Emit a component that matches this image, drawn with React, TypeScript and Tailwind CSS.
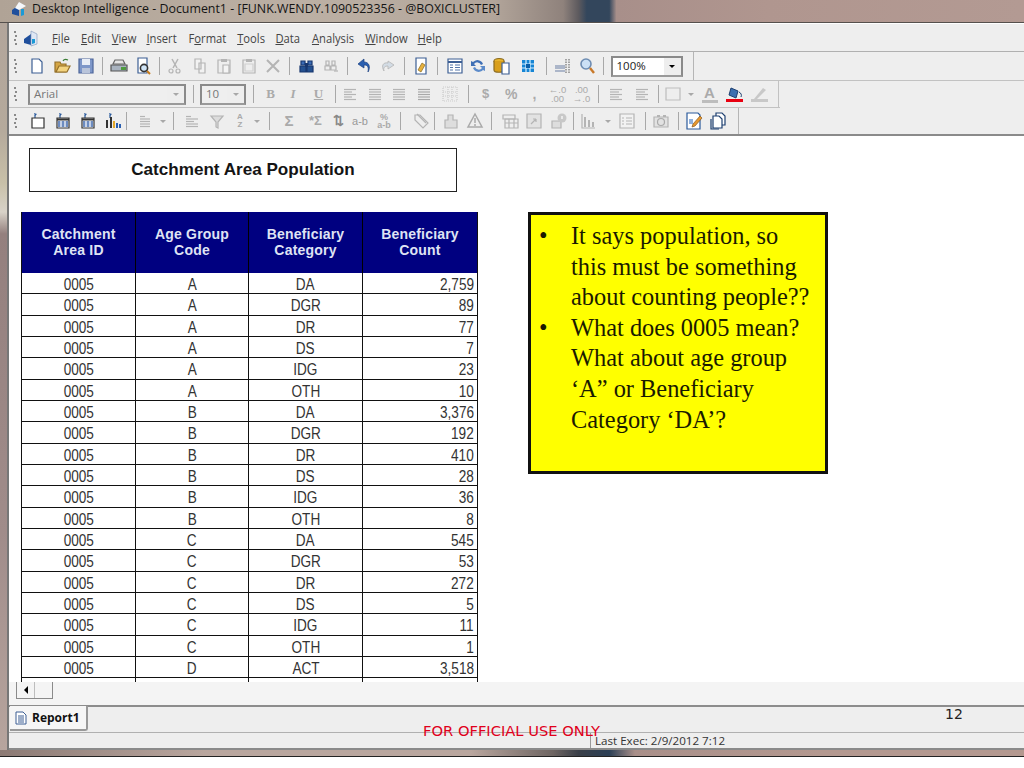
import type { ReactNode } from 'react'

const SANS = "font-['Open_Sans',sans-serif]"
const ARIAL = "font-['Liberation_Sans',Arial,sans-serif]"

const D = '#b4b4b4'
const BLUE = '#1f4f9c'

const rows = [
  ['A', 'DA', '2,759'], ['A', 'DGR', '89'], ['A', 'DR', '77'], ['A', 'DS', '7'], ['A', 'IDG', '23'], ['A', 'OTH', '10'],
  ['B', 'DA', '3,376'], ['B', 'DGR', '192'], ['B', 'DR', '410'], ['B', 'DS', '28'], ['B', 'IDG', '36'], ['B', 'OTH', '8'],
  ['C', 'DA', '545'], ['C', 'DGR', '53'], ['C', 'DR', '272'], ['C', 'DS', '5'], ['C', 'IDG', '11'], ['C', 'OTH', '1'],
  ['D', 'ACT', '3,518'],
]

function Svg({ children }: { children: ReactNode }) {
  return (
    <svg width="18" height="18" viewBox="0 0 18 18" fill="none" strokeWidth="1.2">
      {children}
    </svg>
  )
}

// toolbar slot, 24.5px wide unless told otherwise
function Slot({ children, w = 'w-[24.5px]' }: { children: ReactNode; w?: string }) {
  return <div className={`${w} h-full flex items-center justify-center shrink-0`}>{children}</div>
}

function Sep({ w = 'w-[8.5px]' }: { w?: string }) {
  return (
    <div className={`${w} h-full flex items-center justify-center shrink-0`}>
      <div className="w-px h-[18px] bg-[#a8a8a8]" />
    </div>
  )
}

function Grip() {
  return (
    <div className="w-[16px] pl-[5px] h-full flex flex-col justify-center gap-[2px] shrink-0">
      {[0, 1, 2, 3].map(i => (
        <div key={i} className={`w-[2px] h-[2px] bg-[#8a8a8a] ${i % 2 ? 'ml-[1px]' : ''}`} />
      ))}
    </div>
  )
}

function Caret({ dark }: { dark?: boolean }) {
  return <div className={`w-0 h-0 border-x-[3px] border-x-transparent border-t-[3px] ${dark ? 'border-t-black' : 'border-t-[#a8a8a8]'}`} />
}

function Combo({ w, label, dark, btn = 'w-[14px]' }: { w: string; label: string; dark?: boolean; btn?: string }) {
  return (
    <div className={`${w} h-[21px] flex border-2 border-[#8a8a8a] border-b-[#9a9a9a] border-r-[#8a8a8a] shrink-0 ${dark ? 'bg-white' : 'bg-[#efefef]'}`}>
      <div className={`flex-1 pl-[4px] text-[11.5px] leading-[16px] ${SANS} ${dark ? 'text-[#222]' : 'text-[#777]'}`}>{label}</div>
      <div className={`${btn} bg-[#eeeeee] flex items-center justify-center`}>
        <Caret dark={dark} />
      </div>
    </div>
  )
}

const Lines = ({ x = 3, c = D, widths = [12, 8, 12, 8, 12] }: { x?: number; c?: string; widths?: number[] }) => (
  <Svg>
    {widths.map((w, i) => (
      <path key={i} d={`M${x} ${4.5 + i * 2.5}h${w}`} stroke={c} />
    ))}
  </Svg>
)

function ToolbarOne() {
  return (
    <div className="h-[28px] w-[685px] flex items-center border-r border-[#b5b5b5]">
      <Grip />
      <Slot><Svg><path d="M4 2h7l3 3v11H4z" fill="#fff" stroke="#3d5f94" /></Svg></Slot>
      <Slot><Svg><path d="M2 15V5h5l1 2h5v8z" fill="#d5a645" stroke="#94702a" /><path d="M3 15l3-6h11l-3 6z" fill="#f3d37e" stroke="#94702a" /><path d="M10 4c1-2 3-2 5-1" stroke="#3a7d35" /></Svg></Slot>
      <Slot><Svg><path d="M2 2h14v14H2z" fill="#7e97c9" stroke="#4d6599" /><path d="M5 2h8v6H5z" fill="#e8edf6" /><path d="M5 11h8v5H5z" fill="#b9c4da" /></Svg></Slot>
      <Sep w="w-[8px]" />
      <Slot><Svg><path d="M5 3h8l2 4H3z" fill="#e6e6e6" stroke="#666" /><path d="M1 8h16v6H1z" fill="#a9b3bf" stroke="#555" /><path d="M11 10h5v3h-5z" fill="#4e9a3f" /></Svg></Slot>
      <Slot><Svg><path d="M4 1h9v15H4z" fill="#fff" stroke="#3d5f94" /><circle cx="10" cy="11" r="3.6" fill="#cfe4f7" stroke="#333" strokeWidth="1.6" /><path d="M13 14l3 3" stroke="#c47a1c" strokeWidth="2" /></Svg></Slot>
      <Sep w="w-[7.5px]" />
      <Slot><Svg><path d="M12 2L7 11M6 2l5 9" stroke={D} strokeWidth="1.5" /><circle cx="5" cy="14" r="2" stroke={D} /><circle cx="12" cy="14" r="2" stroke={D} /></Svg></Slot>
      <Slot><Svg><path d="M4 2h6v10H4zM8 6h6v10H8z" fill="#f2f2f2" stroke={D} /></Svg></Slot>
      <Slot><Svg><path d="M3 3h12v13H3z" stroke={D} /><path d="M6 2h6v3H6z" fill={D} /><path d="M8 8h6v8H8z" fill="#f4f4f4" stroke={D} /></Svg></Slot>
      <Slot><Svg><path d="M3 3h12v13H3z" stroke={D} /><path d="M6 2h6v3H6z" fill={D} /><path d="M5 7h8v7H5z" stroke="#d0d0d0" /></Svg></Slot>
      <Slot><Svg><path d="M3 3l12 12M15 3L3 15" stroke={D} strokeWidth="2" /></Svg></Slot>
      <Sep />
      <Slot><Svg><path d="M4 4h4v4H4zM11 4h4v4h-4z" fill="#3c6cb5" stroke="#17366e" /><path d="M3 9h6v6H3zM10 9h6v6h-6z" fill="#24508f" stroke="#17366e" /><path d="M8 6h3v4H8z" fill="#17366e" /></Svg></Slot>
      <Slot><Svg><path d="M4 4h3v4H4zM10 4h3v4h-3zM3 9h5v4H3zM9 9h5v4H9z" stroke={D} /><path d="M12 14h4" stroke={D} /></Svg></Slot>
      <Sep />
      <Slot><Svg><path d="M9 2L3 7l6 4V8c3 0 5 1 4 7 3-5 1-10-4-10z" fill="#2a5fb0" stroke="#1a3f80" strokeWidth=".7" /></Svg></Slot>
      <Slot><Svg><path d="M9 4l6 4-6 4V9C6 9 4 10 5 14 2 9 4 5 9 6z" fill="#d3dce5" stroke={D} strokeWidth=".8" /></Svg></Slot>
      <Sep />
      <Slot><Svg><path d="M4 1h10v16H4z" fill="#fff" stroke="#3d5f94" /><path d="M6 13l4-7 3 2-4 7z" fill="#e6b13e" stroke="#8a6a1f" strokeWidth=".7" /></Svg></Slot>
      <Sep />
      <Slot w="w-[22px] ml-[2px]"><Svg><path d="M2 2h14v14H2z" fill="#fff" stroke="#3d5f94" /><path d="M2 5h14" stroke="#3d5f94" strokeWidth="2" /><path d="M4 8h3M4 10.500h3M4 13h3M9 8h5M9 10.500h5M9 13h5" stroke="#5577aa" /></Svg></Slot>
      <Slot w="w-[24px]"><Svg><path d="M14 7a6 6 0 0 0-10-2L2 4v5h5L5 7a4 4 0 0 1 7 1z" fill="#3f6fb5" /><path d="M4 11a6 6 0 0 0 10 2l2 1V9h-5l2 2a4 4 0 0 1-7-1z" fill="#5c8bca" /></Svg></Slot>
      <Slot w="w-[24px]"><Svg><ellipse cx="6" cy="4" rx="5" ry="2.500" fill="#e8b42c" stroke="#8a6a1f" /><path d="M1 4v9c0 3 10 3 10 0V4" fill="#d99f1b" stroke="#8a6a1f" /><path d="M9 6h7v11H9z" fill="#fff" stroke="#3d5f94" /></Svg></Slot>
      <Slot w="w-[28px]"><Svg><path d="M3 3h12v12H3z" fill="#1685d4" /><path d="M3 7h12M3 11h12M7 3v12M11 3v12" stroke="#d8f0ff" /><path d="M7 7h4v4H7z" fill="#0b5fa8" /></Svg></Slot>
      <Sep />
      <Slot><Svg><path d="M1 9h10M1 11h10M1 14h10" stroke="#6a7fa3" /><path d="M12 2v14M15 2v14" stroke="#8a8a8a" strokeDasharray="1.500 1" strokeWidth="1.500" /></Svg></Slot>
      <Slot><Svg><circle cx="8" cy="7" r="5" fill="#cbe0f5" stroke="#6d8cb2" strokeWidth="1.600" /><path d="M12 11l4 5" stroke="#c8792a" strokeWidth="2.400" /></Svg></Slot>
      <Sep w="w-[7px]" />
      <div className="w-[4px]" />
      <Combo w="w-[72px]" label="100%" dark btn="w-[17px]" />
    </div>
  )
}

function ToolbarTwo() {
  return (
    <div className="h-[26px] w-[770px] flex items-center border-r border-[#c2c2c2]">
      <Grip />
      <div className="w-[3px]" />
      <Combo w="w-[158px]" label="Arial" btn="w-[17px]" />
      <Sep w="w-[14px]" />
      <Combo w="w-[46px]" label="10" btn="w-[17px]" />
      <Sep w="w-[14px]" />
      <Slot w="w-[21px]"><span className="font-['Liberation_Serif',serif] font-bold text-[13px] text-[#aaa]">B</span></Slot>
      <Slot w="w-[24px]"><span className="font-['Liberation_Serif',serif] italic font-bold text-[13px] text-[#aaa]">I</span></Slot>
      <Slot w="w-[27px]"><span className="font-['Liberation_Serif',serif] underline font-bold text-[13px] text-[#aaa]">U</span></Slot>
      <Sep w="w-[6px]" />
      <Slot><Lines widths={[12, 8, 12, 8, 12]} /></Slot>
      <Slot><Lines x={3} widths={[12, 12, 12, 12, 12]} /></Slot>
      <Slot><Lines widths={[12, 12, 12, 12, 12]} /></Slot>
      <Slot><Lines widths={[12, 12, 12, 12, 12]} c="#a8a8a8" /></Slot>
      <Slot w="w-[28px]"><Svg><path d="M2 2h14v14H2zM2 7h14M2 11h14M7 2v14M11 2v14" stroke="#cccccc" strokeDasharray="1 1" /></Svg></Slot>
      <Sep w="w-[8px]" />
      <Slot w="w-[27px]"><span className={`${ARIAL} font-bold text-[13px] text-[#aaa]`}>$</span></Slot>
      <Slot><span className={`${ARIAL} font-bold text-[14px] text-[#aaa]`}>%</span></Slot>
      <Slot w="w-[22px]"><span className={`${ARIAL} font-bold text-[14px] text-[#aaa]`}>,</span></Slot>
      <Slot w="w-[24px]"><span className={`${ARIAL} text-[9.500px] leading-[9px] text-[#aaa] text-center`}>←.0<br />.00</span></Slot>
      <Slot w="w-[24px]"><span className={`${ARIAL} text-[9.500px] leading-[9px] text-[#aaa] text-center`}>.00<br />→.0</span></Slot>
      <Sep w="w-[9px]" />
      <Slot w="w-[26px]"><Lines widths={[12, 9, 12, 9, 12]} x={3} /></Slot>
      <Slot w="w-[26px]"><Lines widths={[12, 9, 12, 9, 12]} x={3} /></Slot>
      <Sep w="w-[8px]" />
      <Slot w="w-[21px]"><Svg><path d="M2 3h14v12H2z" stroke="#bdbdbd" /></Svg></Slot>
      <Slot w="w-[14px]"><Caret /></Slot>
      <Slot w="w-[24px]"><div className="flex flex-col items-center"><span className={`${ARIAL} font-bold text-[15px] leading-[14px] text-[#aaa]`}>A</span><div className="w-[16px] h-[3px] bg-[#bdbdbd]" /></div></Slot>
      <Slot w="w-[26px]"><div className="flex flex-col items-center"><svg width="18" height="13" viewBox="0 0 18 13"><path d="M5 2l7 3-2 7-7-3z" fill="#3d6fb0" stroke="#1d3f70" /><path d="M13 6c2 1 3 3 2 5" stroke="#1d3f70" fill="none" /></svg><div className="w-[17px] h-[3px] bg-[#e80010]" /></div></Slot>
      <Slot w="w-[24px]"><div className="flex flex-col items-center"><svg width="18" height="13" viewBox="0 0 18 13"><path d="M3 13l9-11 3 2-9 9z" fill="#c8c8c8" /></svg><div className="w-[17px] h-[3px] bg-[#c8c8c8]" /></div></Slot>
    </div>
  )
}

function NewBlock({ fill, bars }: { fill?: boolean; bars?: boolean }) {
  return (
    <Svg>
      <path d="M5 1l3 1-2 2z" fill="#2a5a9c" />
      <path d="M6 3v3" stroke="#2a5a9c" />
      {bars ? (
        <>
          <path d="M3 8v8M7 5v11" stroke="#333" strokeWidth="2" />
          <path d="M10 9v7" stroke="#e2a72a" strokeWidth="2" />
          <path d="M13 11v5M16 12v4" stroke="#2a5fb0" strokeWidth="2" />
        </>
      ) : (
        <>
          <path d="M3 6h12v10H3z" fill="#fff" stroke="#333" />
          {fill && <path d="M4 9h10v6H4z" fill="#6d8cc0" />}
          {fill && <path d="M7 9v6M11 9v6" stroke="#fff" />}
          {fill && <path d="M3 7.500h12" stroke="#333" strokeWidth="2" />}
        </>
      )}
    </Svg>
  )
}

function ToolbarThree() {
  const gray = `${ARIAL} font-bold text-[#aaa]`
  return (
    <div className="h-[26px] w-[730px] flex items-center border-r border-[#b5b5b5]">
      <Grip />
      <Slot w="w-[25px]"><NewBlock /></Slot>
      <Slot w="w-[25px]"><NewBlock fill /></Slot>
      <Slot w="w-[25px]"><NewBlock fill /></Slot>
      <Slot w="w-[25px]"><NewBlock bars /></Slot>
      <Sep w="w-[3px]" />
      <Slot w="w-[30px] ml-[2px]"><Lines x={4} widths={[5, 10, 10, 10, 10]} /></Slot>
      <Slot w="w-[6px]"><Caret /></Slot>
      <Sep w="w-[14px]" />
      <Slot><Lines x={3} widths={[5, 12, 8, 12, 12]} /></Slot>
      <Slot><Svg><path d="M3 4h12L10 10v6l-2-1v-5z" fill="#dcdcdc" stroke={D} /></Svg></Slot>
      <Slot w="w-[22px]"><div className={`${gray} text-[8px] leading-[8px] text-center`}>A<br />Z</div></Slot>
      <Slot w="w-[12px]"><Caret /></Slot>
      <Sep w="w-[12px]" />
      <Slot w="w-[28px]"><span className={`${gray} text-[15px]`}>Σ</span></Slot>
      <Slot w="w-[25px]"><span className={`${gray} text-[13px]`}>*Σ</span></Slot>
      <Slot w="w-[20px]"><span className={`${ARIAL} font-bold text-[13px] text-[#888]`}>⇅</span></Slot>
      <Slot w="w-[24px]"><span className={`${ARIAL} text-[11px] text-[#999]`}>a-b</span></Slot>
      <Slot w="w-[24px]"><span className={`${ARIAL} font-bold text-[9px] leading-[8px] text-center text-[#aaa]`}>%<br />a-b</span></Slot>
      <Sep w="w-[8px]" />
      <Slot w="w-[26px] ml-[4px]"><Svg><path d="M3 3h5l8 8-5 5-8-8z" fill="#eee" stroke={D} /><path d="M5 2l9 9" stroke={D} /></Svg></Slot>
      <Sep w="w-[1px]" />
      <Slot w="w-[24.5px] ml-[3.5px]"><Svg><path d="M6 3h5v5h4v8H3V8h3z" fill="#ddd" stroke={D} /></Svg></Slot>
      <Slot><Svg><path d="M9 2l7 13H2z" fill="#eee" stroke="#aaa" strokeWidth="1.500" /><path d="M9 6v5M9 12v2" stroke="#aaa" strokeWidth="1.500" /></Svg></Slot>
      <Sep w="w-[8px]" />
      <Slot w="w-[24.5px] ml-[2px]"><Svg><path d="M2 3h12v4H2z" stroke={D} /><path d="M4 7h13v9H4zM4 11h13M8 7v9M13 7v9" stroke={D} /></Svg></Slot>
      <Slot><Svg><path d="M2 2h14v14H2z" fill="#e2e2e2" stroke={D} /><path d="M6 12l5-5M11 7v3M11 7H8" stroke={D} /></Svg></Slot>
      <Slot><Svg><path d="M2 9h9v7H2z" fill="#ddd" stroke={D} /><circle cx="12" cy="6" r="4.500" fill="#c8c8c8" /><path d="M12 4v3" stroke="#fff" /></Svg></Slot>
      <Sep w="w-[4px]" />
      <Slot w="w-[26px]"><Svg><path d="M3 2v14h13" stroke={D} /><path d="M6 5v10M10 8v7M14 10v5" stroke={D} strokeWidth="2" /></Svg></Slot>
      <Slot w="w-[14px]"><Caret /></Slot>
      <Slot w="w-[24px]"><Svg><path d="M2 2h14v14H2z" fill="#f2f2f2" stroke={D} /><path d="M4 6h2M8 6h6M4 9h2M8 9h6M4 12h2M8 12h6" stroke={D} /></Svg></Slot>
      <Sep w="w-[12px]" />
      <Slot w="w-[20px]"><Svg><path d="M2 5h14v10H2z" fill="#e2e2e2" stroke={D} /><circle cx="9" cy="10" r="3.500" stroke="#aaa" /><path d="M5 3h3v2H5zM11 3h3v2h-3z" fill={D} /></Svg></Slot>
      <Sep w="w-[14px]" />
      <Slot w="w-[18px]"><Svg><path d="M2 1h11l2 2v14H2z" fill="#fff" stroke="#2a5a9c" /><path d="M4 7h4v5H4z" fill="#8fb0dc" /><path d="M8 12l7-8 2 2-7 8-3 1z" fill="#e6982f" stroke="#8a5a1f" strokeWidth=".7" /></Svg></Slot>
      <Slot w="w-[30px]"><Svg><path d="M7 1h6l3 3v9H7z" fill="#fff" stroke="#1d3f70" /><path d="M4 4h6l3 3v9H4z" fill="#fff" stroke="#1d3f70" /><path d="M2 7v10h8" stroke="#1d3f70" /></Svg></Slot>
    </div>
  )
}

function Cell({ children, right, border = true }: { children: ReactNode; right?: boolean; border?: boolean }) {
  return (
    <div className={`h-[21.33px] pt-[4px] flex items-center border-b border-[#111] ${border ? 'border-r' : ''} ${right ? 'justify-end pr-[3px]' : 'justify-center'}`}>
      <span className={`inline-block text-[16px] leading-[16px] text-[#333] scale-x-[0.85] ${right ? 'origin-right' : 'origin-center'}`}>{children}</span>
    </div>
  )
}

function Head({ lines, last }: { lines: [string, string]; last?: boolean }) {
  return (
    <div className={`h-[61px] pb-[2px] flex flex-col items-center justify-center text-[14px] leading-[16px] font-bold tracking-[0.2px] text-[#dfe3f4] ${last ? '' : 'border-r border-black'}`}>
      <span>{lines[0]}</span>
      <span>{lines[1]}</span>
    </div>
  )
}

export default function App() {
  return (
    <div className={`relative w-[1024px] h-[768px] overflow-hidden bg-white flex flex-col ${SANS}`}>
      {/* title bar */}
      <div className="h-[23px] shrink-0 flex items-center border-b border-[#55504d] bg-[linear-gradient(90deg,#b0a396_0%,#bcb0a4_30%,#b3a69b_48%,#8f827c_55%,#5d5a5e_56.500%,#33465c_57.300%,#33465c_59.500%,#a88f8a_60.200%,#b0968f_75%,#b39a93_100%)]">
        <svg width="18" height="18" viewBox="0 0 18 18" className="ml-[10px] mr-[4px] -mt-[5px]">
          <path d="M2 10l7-5v11l-7-2z" fill={BLUE} />
          <path d="M9 2l7 4-7 4-4-2z" fill="#f4f7fb" />
          <path d="M11 9h3v6l-3 1z" fill="#1b9ad6" />
        </svg>
        <span className="text-[12.400px] leading-[16px] text-[#141414] -mt-[5px]">Desktop Intelligence - Document1 - [FUNK.WENDY.1090523356 - @BOXICLUSTER]</span>
      </div>

      <div className="flex-1 min-h-0 flex">
        {/* left window frame */}
        <div className="w-[7px] shrink-0 bg-[linear-gradient(180deg,#b2a59b_0%,#b5aa9c_15%,#c8c0a8_22%,#d8d2c8_26%,#94807e_29%,#a08c8a_70%,#b7a59e_100%)]" />

        <div className="flex-1 min-w-0 flex flex-col border-l-2 border-[#777]">
          {/* menu bar */}
          <div className="h-[29px] shrink-0 bg-[#eeeeee] flex items-center border-b border-[#b0b0b0] border-t border-t-white">
            <Grip />
            <svg width="18" height="18" viewBox="0 0 18 18" className="-ml-[3px] mt-[1px]">
              <path d="M2 10l7-5v11l-7-2z" fill={BLUE} />
              <path d="M9 2l6 3v10l-6 2z" fill="#dfe7f4" stroke="#7c93b8" strokeWidth=".6" />
              <path d="M10 10h3v4l-3 1z" fill="#1b9ad6" />
            </svg>
            <div className="ml-[12px] pt-[2px] flex text-[12px] text-[#444] scale-x-[0.935] origin-left">
              <span className="w-[31px]"><u>F</u>ile</span>
              <span className="w-[33px]"><u>E</u>dit</span>
              <span className="w-[37px]"><u>V</u>iew</span>
              <span className="w-[45px]"><u>I</u>nsert</span>
              <span className="w-[52px]">F<u>o</u>rmat</span>
              <span className="w-[41px]"><u>T</u>ools</span>
              <span className="w-[39px]"><u>D</u>ata</span>
              <span className="w-[57px]"><u>A</u>nalysis</span>
              <span className="w-[56px]"><u>W</u>indow</span>
              <span><u>H</u>elp</span>
            </div>
          </div>

          {/* toolbars */}
          <div className="shrink-0 bg-[#eeeeee] border-b-2 border-[#8a8a8a]">
            <div className="border-b border-[#c2c2c2]"><ToolbarOne /></div>
            <div className="border-b border-[#c2c2c2] w-[771px]"><ToolbarTwo /></div>
            <ToolbarThree />
          </div>

          {/* report canvas */}
          <div className={`flex-1 min-h-0 overflow-hidden bg-white pt-[12px] pl-[12px] ${ARIAL}`}>
            <div className="ml-[8px] w-[428px] h-[44px] pb-[1px] border border-[#222] flex items-center justify-center text-[17.100px] font-bold text-[#141414]">
              Catchment Area Population
            </div>
            <div className="mt-[20px] flex items-start">
              <div className="w-[457px] border-x border-[#111]">
                <div className="grid grid-cols-[114px_113px_114px_114px] bg-[#000080]">
                  <Head lines={['Catchment', 'Area ID']} />
                  <Head lines={['Age Group', 'Code']} />
                  <Head lines={['Beneficiary', 'Category']} />
                  <Head lines={['Beneficiary', 'Count']} last />
                </div>
                <div className="grid grid-cols-[114px_113px_114px_114px]">
                  {rows.map((r, i) => (
                    <div key={i} className="contents">
                      <Cell>0005</Cell>
                      <Cell>{r[0]}</Cell>
                      <Cell>{r[1]}</Cell>
                      <Cell right border={false}>{r[2]}</Cell>
                    </div>
                  ))}
                  <div className="h-[6px] border-r border-[#111]" />
                  <div className="h-[6px] border-r border-[#111]" />
                  <div className="h-[6px] border-r border-[#111]" />
                  <div className="h-[6px]" />
                </div>
              </div>
              <div className="ml-[50px] w-[300px] h-[262px] border-[3px] border-[#111] bg-[#ffff00] pt-[6px] pl-[8px] pr-[4px] text-[#1a1a00] font-['Liberation_Serif',serif] text-[24.400px] leading-[30.600px]">
                <div className="flex">
                  <span className="w-[32px] shrink-0">•</span>
                  <span className="w-[245px]">It says population, so this must be something about counting people??</span>
                </div>
                <div className="flex">
                  <span className="w-[32px] shrink-0">•</span>
                  <span className="w-[245px]">What does 0005 mean? What about age group ‘A” or Beneficiary Category ‘DA’?</span>
                </div>
              </div>
            </div>
          </div>

          {/* horizontal scroll row */}
          <div className="h-[23px] shrink-0 bg-[#f4f4f4] flex items-start pl-[7px]">
            <div className="w-[37px] h-[17px] border-l border-r border-b border-[#8a8a8a] flex">
              <div className="w-[18px] h-full border-r border-[#bdbdbd] flex items-center justify-center">
                <div className="w-0 h-0 border-y-[4px] border-y-transparent border-r-[4px] border-r-black" />
              </div>
            </div>
          </div>

          {/* tab row */}
          <div className="h-[27px] shrink-0 bg-[#eeeeee] border-t-2 border-[#8c8c8c] flex items-start">
            <div className="-mt-[1px] ml-[1px] w-[78px] h-[25px] bg-[#f6f6f6] border-r-2 border-b-2 border-[#999] rounded-br-[3px] flex items-center pl-[4px] gap-[4px]">
              <svg width="14" height="14" viewBox="0 0 14 14">
                <path d="M2 1h7l3 3v9H2z" fill="#fff" stroke="#3d5f94" />
                <path d="M4 5h6M4 7h6M4 9h6M4 11h6" stroke="#3d5f94" />
              </svg>
              <span className="text-[12px] font-bold text-[#111]">Report1</span>
            </div>
          </div>

          {/* status bar */}
          <div className="h-[18px] shrink-0 bg-[#eeeeee] border-t border-[#b0b0b0] border-b-2 border-b-[#8a8a8a] flex">
            <div className="ml-[581px] h-full border-l border-[#999] pl-[4px] text-[11.600px] leading-[15px] text-[#333]">Last Exec: 2/9/2012 7:12</div>
          </div>
        </div>
      </div>

      {/* bottom window frame */}
      <div className="h-[7px] shrink-0 bg-[linear-gradient(90deg,#8c7a74_0%,#b9a69e_20%,#b9a69e_46%,#6e6562_54%,#3a3f48_56.500%,#2b3f55_59.500%,#a98f89_62%,#b3988f_80%,#b3988f_100%)] border-b border-[#222]" />
      <div className="h-[11px] shrink-0 bg-white" />

      {/* overprinted slide text */}
      <div className="absolute left-[423px] top-[723px] text-[14.700px] leading-[16px] text-[#e0001b] font-['DejaVu_Sans',sans-serif] whitespace-nowrap">FOR OFFICIAL USE ONLY</div>
      <div className="absolute left-[945px] top-[705px] text-[14px] leading-[18px] text-[#222] font-['DejaVu_Sans',sans-serif]">12</div>
    </div>
  )
}
